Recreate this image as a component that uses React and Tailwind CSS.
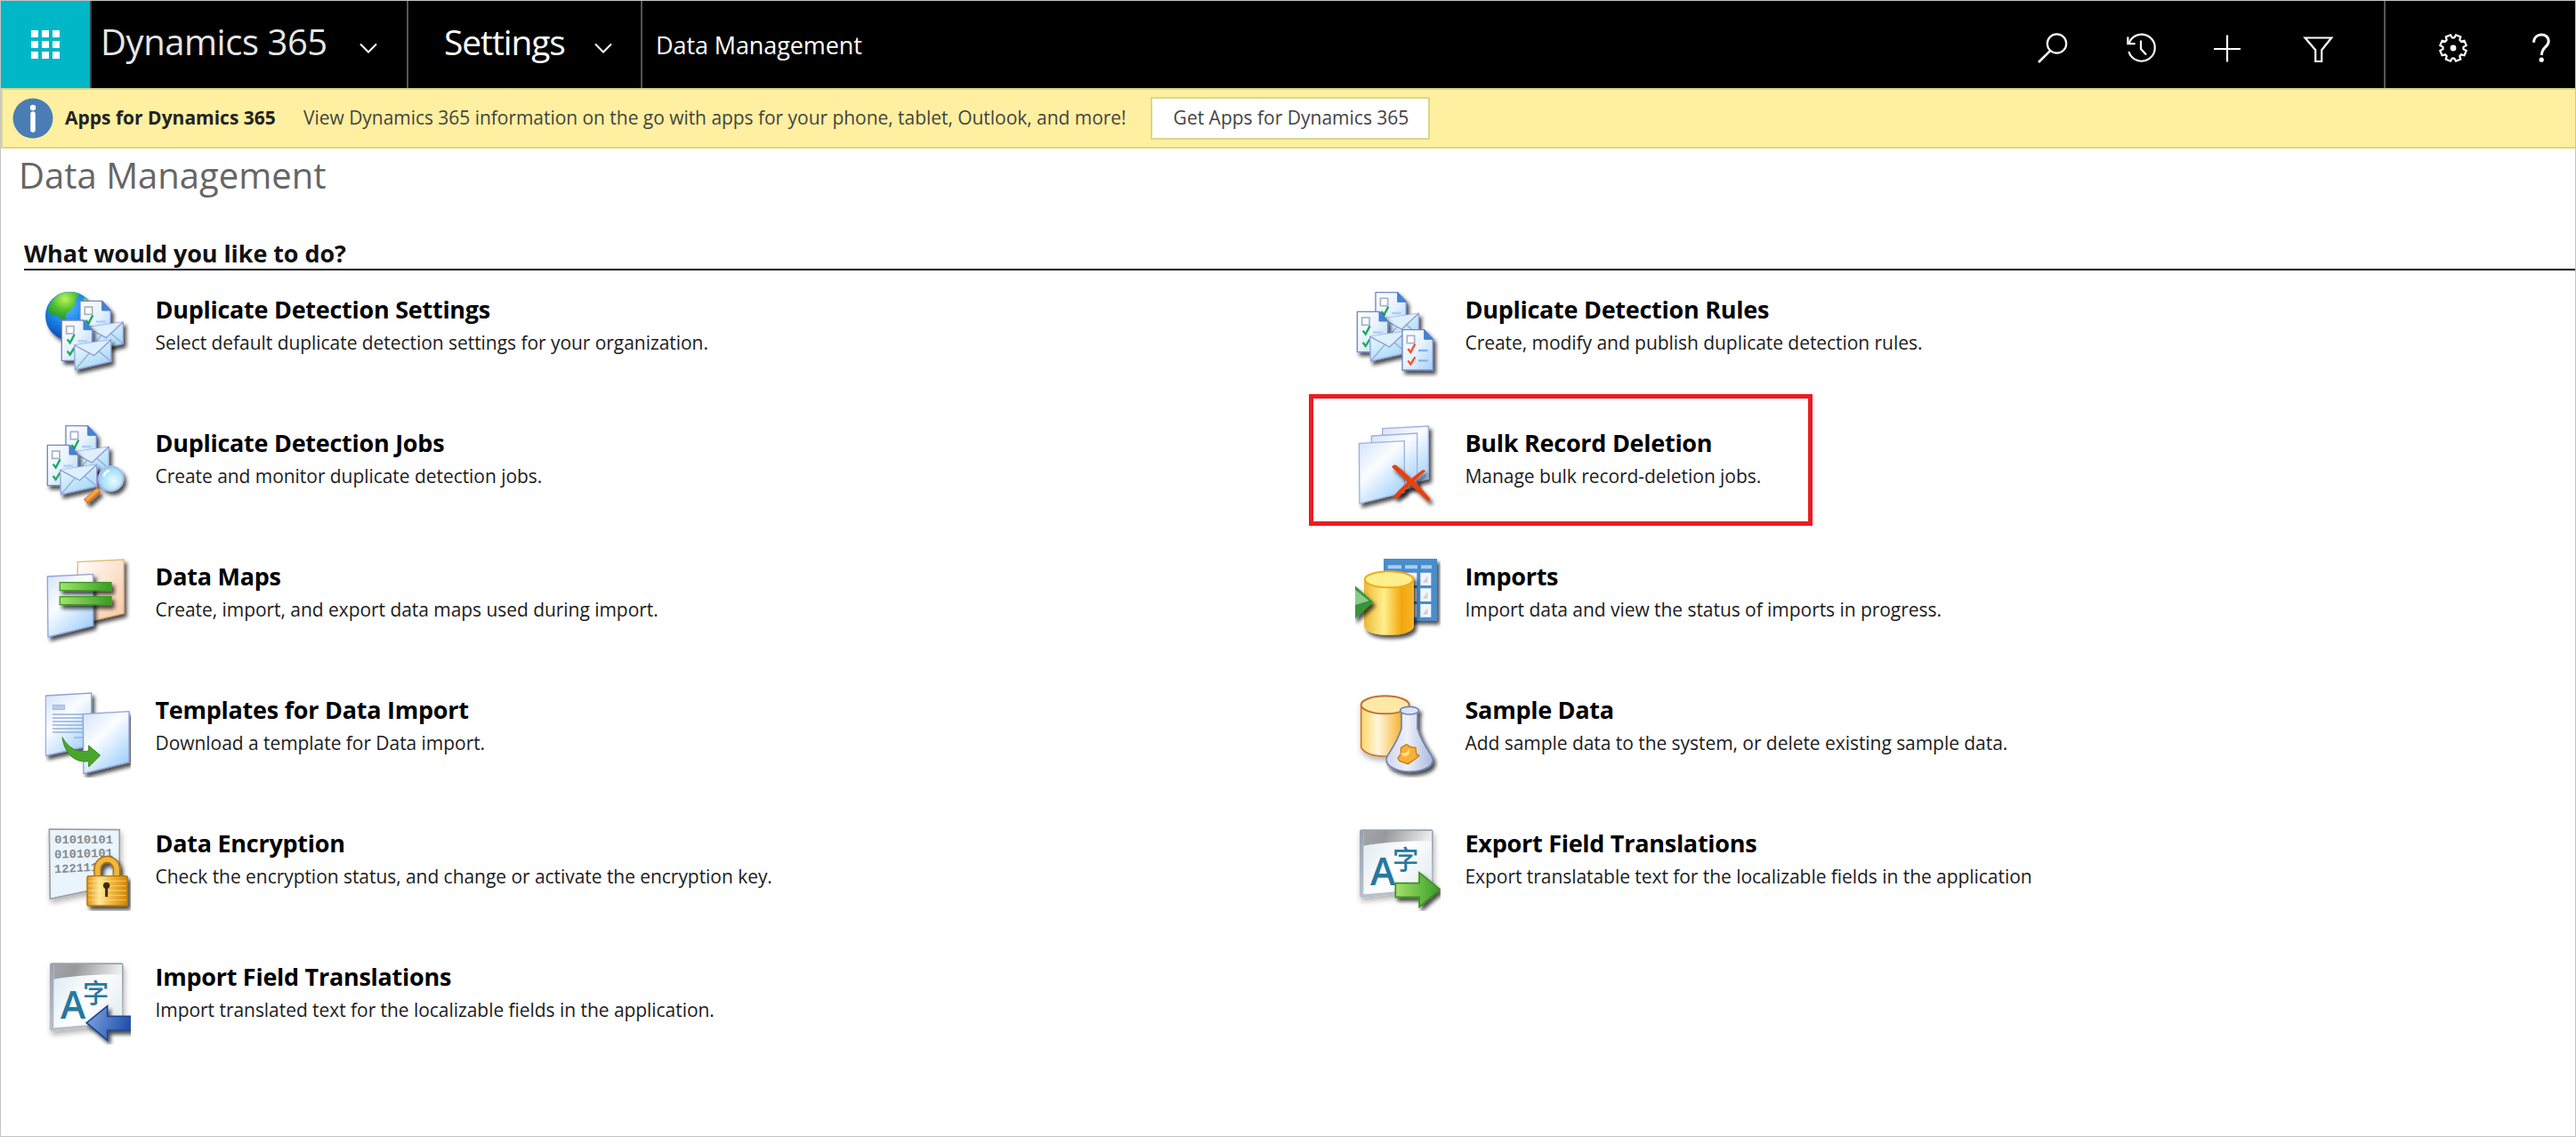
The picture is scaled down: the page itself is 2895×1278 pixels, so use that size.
import React from "react";

const FONT = "font-['Open_Sans','Noto_Sans','Noto_Sans_CJK_SC',sans-serif]";

/* ---------- shared gradients and filters ---------- */

function Defs() {
  return (
    <svg className="absolute size-0" aria-hidden="true">
      <defs>
        <linearGradient id="paper" x1="0" y1="0" x2="1" y2="1">
          <stop offset="0" stopColor="#ffffff" />
          <stop offset="0.5" stopColor="#e6f2fe" />
          <stop offset="1" stopColor="#a4cff8" />
        </linearGradient>
        <linearGradient id="sheet" x1="0" y1="0" x2="0.7" y2="1">
          <stop offset="0" stopColor="#d3e3fa" />
          <stop offset="0.45" stopColor="#fbfdff" />
          <stop offset="1" stopColor="#a3d1fc" />
        </linearGradient>
        <linearGradient id="peach" x1="0" y1="0" x2="1" y2="1">
          <stop offset="0" stopColor="#ffffff" />
          <stop offset="1" stopColor="#f9c7a0" />
        </linearGradient>
        <linearGradient id="mail" x1="0" y1="0" x2="0.6" y2="1">
          <stop offset="0" stopColor="#f6fcff" />
          <stop offset="0.5" stopColor="#cdebfb" />
          <stop offset="1" stopColor="#a2d8f6" />
        </linearGradient>
        <linearGradient id="bar" x1="0" y1="0" x2="1" y2="0">
          <stop offset="0" stopColor="#a4e26a" />
          <stop offset="1" stopColor="#379c26" />
        </linearGradient>
        <linearGradient id="blueArrow" x1="0" y1="0" x2="1" y2="0.3">
          <stop offset="0" stopColor="#84a9e6" />
          <stop offset="1" stopColor="#2452ab" />
        </linearGradient>
        <linearGradient id="gold" x1="0" y1="0" x2="1" y2="0">
          <stop offset="0" stopColor="#eeb736" />
          <stop offset="0.4" stopColor="#fff08c" />
          <stop offset="0.75" stopColor="#f3a60d" />
          <stop offset="1" stopColor="#f6b52c" />
        </linearGradient>
        <linearGradient id="paleGold" x1="0" y1="0" x2="1" y2="0">
          <stop offset="0" stopColor="#fdd668" />
          <stop offset="0.35" stopColor="#fff7dc" />
          <stop offset="0.85" stopColor="#f6b22e" />
        </linearGradient>
        <linearGradient id="lock" x1="0" y1="0" x2="1" y2="0">
          <stop offset="0" stopColor="#e0920f" />
          <stop offset="0.3" stopColor="#ffe79a" />
          <stop offset="0.6" stopColor="#f2b73c" />
          <stop offset="1" stopColor="#d08404" />
        </linearGradient>
        <linearGradient id="titlebar" x1="0" y1="0" x2="1" y2="0.1">
          <stop offset="0" stopColor="#a2a4a7" />
          <stop offset="0.35" stopColor="#97999b" />
          <stop offset="1" stopColor="#eceded" />
        </linearGradient>
        <linearGradient id="pane" x1="0" y1="0" x2="1" y2="0.6">
          <stop offset="0" stopColor="#d8e8f0" />
          <stop offset="0.6" stopColor="#ffffff" />
          <stop offset="1" stopColor="#e8eff3" />
        </linearGradient>
        <linearGradient id="frame" x1="0" y1="0" x2="0" y2="1">
          <stop offset="0" stopColor="#98a1b0" />
          <stop offset="1" stopColor="#b9c0cc" />
        </linearGradient>
        <linearGradient id="glass" x1="0" y1="0" x2="1" y2="0">
          <stop offset="0" stopColor="#cdd6ec" />
          <stop offset="0.45" stopColor="#eef1fa" />
          <stop offset="1" stopColor="#aab8dc" />
        </linearGradient>
        <radialGradient id="ocean" cx="0.45" cy="0.3" r="0.75">
          <stop offset="0" stopColor="#5cb8ff" />
          <stop offset="0.5" stopColor="#1a83ea" />
          <stop offset="1" stopColor="#0a3fa6" />
        </radialGradient>
        <radialGradient id="land" cx="0.55" cy="0.25" r="0.8">
          <stop offset="0" stopColor="#bdf25c" />
          <stop offset="0.5" stopColor="#4fc02c" />
          <stop offset="1" stopColor="#1f8a3a" />
        </radialGradient>
        <radialGradient id="lens" cx="0.6" cy="0.6" r="0.65">
          <stop offset="0" stopColor="#e9fcff" />
          <stop offset="0.7" stopColor="#a5e1fb" />
          <stop offset="1" stopColor="#8fc4ee" />
        </radialGradient>
        <filter id="shadow" x="-20%" y="-20%" width="150%" height="150%">
          <feDropShadow dx="9" dy="12" stdDeviation="6" floodColor="#000" floodOpacity="0.7" />
        </filter>
        <filter id="softShadow" x="-20%" y="-20%" width="150%" height="150%">
          <feDropShadow dx="4" dy="12" stdDeviation="9" floodColor="#000" floodOpacity="0.3" />
        </filter>
      </defs>
    </svg>
  );
}

function Tile({ children }) {
  return (
    <svg viewBox="0 0 288 288" className="block size-24 shrink-0 overflow-hidden">
      {children}
    </svg>
  );
}

/* ---------- tile artwork ---------- */

function CheckDoc({ x, y, check = "#17ab5c", line = "#a9cdf5" }) {
  return (
    <g transform={`translate(${x} ${y})`}>
      <path d="M0 0H74L103 32V136H0Z" fill="url(#paper)" stroke="#7187c8" strokeWidth="4" />
      <path d="M74 0L103 32H74Z" fill="#3c85dc" stroke="#5a75c0" strokeWidth="3" />
      <rect x="16" y="20" width="25" height="25" fill="#fff" stroke="#a9afc6" strokeWidth="5" />
      <path d="M19 64L28 76L43 48" fill="none" stroke={check} strokeWidth="7" />
      <path d="M19 104L28 116L43 92" fill="none" stroke={check} strokeWidth="7" />
      <path d="M54 70H86M54 104H86" stroke={line} strokeWidth="7" />
    </g>
  );
}

function Envelope({ x, y }) {
  return (
    <g transform={`translate(${x} ${y})`}>
      <path d="M0 18L123 0V73L2 101Z" fill="url(#mail)" stroke="#98a0da" strokeWidth="4" />
      <path d="M2 101L50 45M123 73L82 38" stroke="#9da6da" strokeWidth="4" />
      <path d="M0 18L66 53L123 0" fill="#dcf0fd" stroke="#8f98d2" strokeWidth="4" />
    </g>
  );
}

function MailStack() {
  return (
    <>
      <g filter="url(#shadow)"><CheckDoc x={69} y={2} /></g>
      <g filter="url(#shadow)"><Envelope x={91} y={73} /></g>
      <g filter="url(#shadow)">
        <CheckDoc x={7} y={67} />
        <Envelope x={50} y={133} />
      </g>
    </>
  );
}

const DetectionSettingsIcon = () => (
  <Tile>
    <g filter="url(#shadow)">
      <circle cx="82" cy="81" r="82" fill="url(#ocean)" />
      <path d="M8 62C14 34 34 12 62 3C84 -1 104 2 113 6C108 22 96 22 104 34C100 46 88 50 84 66C74 68 66 76 70 90C60 100 50 92 44 84C34 78 22 84 16 76Z" fill="url(#land)" />
      <path d="M124 18C136 20 150 36 154 46L130 38Z" fill="url(#land)" />
    </g>
    <g transform="translate(48 29)"><MailStack /></g>
  </Tile>
);

const DetectionJobsIcon = () => (
  <Tile>
    <MailStack />
    <g filter="url(#shadow)">
      <path d="M180 219L136 258" stroke="#c4743a" strokeWidth="22" />
      <path d="M178 217L137 253" stroke="#f9a13f" strokeWidth="13" />
      <circle cx="221" cy="180" r="41" fill="url(#lens)" stroke="#a9c0ea" strokeWidth="6" />
      <path d="M196 172A28 28 0 0 1 216 152" fill="none" stroke="#fff" strokeWidth="8" />
    </g>
  </Tile>
);

const DetectionRulesIcon = () => (
  <Tile>
    <MailStack />
    <g filter="url(#shadow)"><CheckDoc x={159} y={128} check="#f0552a" line="#7db4ec" /></g>
  </Tile>
);

const BulkDeletionIcon = () => (
  <Tile>
    <g filter="url(#shadow)" stroke="#9fb0dd" strokeWidth="4" fill="url(#sheet)">
      <path d="M92 11L247 3V180L92 220Z" />
      <path d="M55 36L209 27V206L55 240Z" />
      <path d="M13 61L166 53V226L15 264Z" />
    </g>
    <g filter="url(#shadow)" fill="#e8400e">
      <path d="M124 142Q126 132 138 134Q200 184 254 248L246 258Q184 196 124 142Z" />
      <path d="M228 150L238 154Q188 196 146 242Q134 250 128 240Q172 190 228 150Z" />
    </g>
  </Tile>
);

const DataMapsIcon = () => (
  <Tile>
    <g filter="url(#shadow)">
      <path d="M109 11L264 3V184L109 220Z" fill="url(#peach)" stroke="#e3b878" strokeWidth="4" />
    </g>
    <g filter="url(#shadow)">
      <path d="M7 60L161 52V226L9 264Z" fill="url(#sheet)" stroke="#8fa2dc" strokeWidth="4" />
    </g>
    <g filter="url(#shadow)" fill="url(#bar)" stroke="#3f9a25" strokeWidth="4">
      <rect x="49" y="80" width="173" height="27" />
      <rect x="49" y="128" width="173" height="27" />
    </g>
  </Tile>
);

const TemplatesIcon = () => (
  <Tile>
    <g filter="url(#shadow)">
      <path d="M1 12L155 3V180L1 214Z" fill="url(#sheet)" stroke="#8fa2dc" strokeWidth="4" />
    </g>
    <rect x="25" y="43" width="40" height="16" fill="#b9cbea" stroke="#93abd8" strokeWidth="2" />
    <path d="M24 75H130M24 87H130M24 99H130M24 111H130M24 123H130M24 135H130M96 153H130" stroke="#96aedb" strokeWidth="5" />
    <g filter="url(#shadow)">
      <path d="M127 74L282 65V236L129 274Z" fill="url(#sheet)" stroke="#8fa2dc" strokeWidth="4" />
    </g>
    <path d="M57 152C76 186 106 206 146 198V180L185 213L146 252V233C98 240 64 205 57 152Z" fill="#4aa52c" stroke="#3a8f24" strokeWidth="3" />
  </Tile>
);

const EncryptionIcon = () => (
  <Tile>
    <g filter="url(#softShadow)">
      <path d="M13 12L250 14V198L16 247Z" fill="#e9f4fd" stroke="#9a9da1" strokeWidth="5" />
    </g>
    <g className="font-['Liberation_Mono',monospace] text-[41px] font-bold" fill="#85898d">
      <text x="31" y="61">01010101</text>
      <text x="31" y="110" transform="rotate(-1.5 31 110)">01010101</text>
      <text x="31" y="160" transform="rotate(-3 31 160)">122111</text>
    </g>
    <g filter="url(#shadow)">
      <path d="M176 172V146A32 32 0 0 1 240 146V172" fill="none" stroke="#a96f10" strokeWidth="26" />
      <path d="M176 172V146A32 32 0 0 1 240 146V172" fill="none" stroke="#efb73f" strokeWidth="17" />
      <rect x="141" y="170" width="136" height="100" rx="4" fill="url(#lock)" stroke="#b57409" strokeWidth="4" />
      <path d="M145 187H273M145 203H273M145 219H273M145 235H273M145 251H273" stroke="#fff0ae" strokeOpacity="0.45" strokeWidth="4" />
      <circle cx="206" cy="202" r="11" fill="#3b2a08" />
      <path d="M206 202V240" stroke="#3b2a08" strokeWidth="9" />
    </g>
  </Tile>
);

function TranslationWindow() {
  return (
    <>
      <path filter="url(#softShadow)" d="M22 13H256Q263 13 263 20V212Q263 218 256 219L24 243Q15 243 15 235V22Q15 13 22 13Z" fill="url(#frame)" />
      <path d="M28 18H258V212L28 232Z" fill="url(#pane)" />
      <path d="M28 18H258V52Q120 52 28 68Z" fill="url(#titlebar)" />
      <g fill="#27789f">
        <text x="51" y="202" className="font-['Open_Sans',sans-serif] text-[128px] font-semibold">A</text>
        <text x="126" y="146" className="font-['Noto_Sans_CJK_SC',sans-serif] text-[88px] font-medium">字</text>
      </g>
    </>
  );
}

const ExportTranslationsIcon = () => (
  <Tile>
    <TranslationWindow />
    <path filter="url(#shadow)" d="M136 194H216V158L286 215L216 274V241H136Z" fill="url(#bar)" stroke="#3c8f22" strokeWidth="5" />
  </Tile>
);

const ImportTranslationsIcon = () => (
  <Tile>
    <TranslationWindow />
    <path filter="url(#shadow)" d="M139 215L209 158V193H292V240H209V274Z" fill="url(#blueArrow)" stroke="#1f458f" strokeWidth="5" />
  </Tile>
);

const ImportsIcon = () => (
  <Tile>
    <g filter="url(#shadow)"><path d="M96 0H276V209H96Z" fill="#4a8dcd" /></g>
    <path d="M110 28H156M168 28H210M222 28H258" stroke="#a9cdf0" strokeWidth="12" />
    <g fill="#f4f6fa">
      <path d="M166 47H208V90H166ZM220 47H256V90H220ZM166 100H208V144H166ZM220 100H256V144H220ZM166 153H208V197H166ZM220 153H256V197H220Z" />
    </g>
    <path d="M228 80L244 58V80ZM228 134L244 112V134ZM228 188L244 166V188Z" fill="#c9ced8" />
    <g filter="url(#shadow)">
      <path d="M30 70V230Q44 257 114 257Q184 257 198 230V70Z" fill="url(#gold)" />
      <ellipse cx="114" cy="70" rx="82" ry="27" fill="#fdf08c" stroke="#eeab1c" strokeWidth="6" />
    </g>
    <path filter="url(#shadow)" d="M-4 88L61 146L-4 206Z" fill="#39953a" />
    <path d="M0 104L46 142L0 156Z" fill="#8ccb8b" />
  </Tile>
);

const SampleDataIcon = () => (
  <Tile>
    <g filter="url(#softShadow)">
      <path d="M20 43V186Q36 216 101 216Q166 216 182 186V43Z" fill="url(#paleGold)" stroke="#c67a3a" strokeWidth="5" />
      <ellipse cx="101" cy="43" rx="81" ry="30" fill="#fde9a6" stroke="#c06f35" strokeWidth="6" />
    </g>
    <g filter="url(#shadow)">
      <path d="M156 64V122Q146 158 110 212Q96 236 120 252Q146 268 183 268Q222 268 248 252Q270 236 256 212Q220 158 210 122V64Z" fill="url(#glass)" stroke="#6f7fb2" strokeWidth="5" />
      <ellipse cx="183" cy="62" rx="31" ry="13" fill="#dbe3f5" stroke="#7585b8" strokeWidth="5" />
    </g>
    <path d="M172 176L186 184L204 188L206 208L216 214L202 226L178 242L150 232L144 222L154 208V188Z" fill="#f8b133" stroke="#c9781c" strokeWidth="4" />
    <path d="M152 206L172 204L184 190L182 210L166 218Z" fill="#ffe08c" />
  </Tile>
);

/* ---------- top bar icons ---------- */

const gearPath = (() => {
  const pts = [];
  for (let i = 0; i < 8; i++) {
    const a = (i * 45 + 22.5) * (Math.PI / 180);
    [[-0.29, 11.6], [-0.19, 15], [0.19, 15], [0.29, 11.6]].forEach(([d, r]) => {
      pts.push(`${(17 + r * Math.cos(a + d)).toFixed(2)} ${(17 + r * Math.sin(a + d)).toFixed(2)}`);
    });
  }
  return `M${pts.join("L")}Z`;
})();

function BarIcon({ children }) {
  return (
    <svg viewBox="0 0 34 34" className="block size-[34px] shrink-0 overflow-visible" fill="none" stroke="#fff" strokeWidth="2.2">
      {children}
    </svg>
  );
}

function Chevron({ className }) {
  return (
    <svg viewBox="0 0 20 12" className={`h-3 w-5 shrink-0 ${className}`} fill="none" stroke="#fff" strokeWidth="2">
      <path d="M1 1.5L10 10.5L19 1.5" />
    </svg>
  );
}

function TopBar() {
  return (
    <header className="flex h-[98px] bg-black text-white">
      <div className="flex w-[102px] items-center justify-center border-r-2 border-[#444] bg-[#00b7c7]">
        <div className="grid grid-cols-3 gap-1">
          {Array.from({ length: 9 }, (_, i) => (
            <span key={i} className="size-2 bg-white" />
          ))}
        </div>
      </div>
      <div className="flex w-[356px] items-center border-r-2 border-[#555] pl-[10px]">
        <span className="w-[291px] pb-[7px] text-[40px] leading-[54px] tracking-[-0.45px] text-[#e6e6e6]">Dynamics 365</span>
        <Chevron className="mt-2" />
      </div>
      <div className="flex w-[263px] items-center border-r-2 border-[#555] pl-[40px]">
        <span className="w-[169px] pb-[7px] text-[39px] leading-[54px] tracking-[-1.1px]">Settings</span>
        <Chevron className="mt-2" />
      </div>
      <div className="flex items-center pt-0.5 pl-[15px] text-[27px] tracking-[-0.1px]">Data Management</div>
      <div className="ml-auto flex">
        <div className="flex w-[392px] items-center gap-[65px] border-r-2 border-[#555] pt-2">
          <BarIcon>
            <circle cx="22.5" cy="12" r="10.7" />
            <path d="M15.3 19.8L2 33" strokeWidth="2.6" />
          </BarIcon>
          <BarIcon>
            <g transform="translate(2 0)">
              <path d="M2.8 11.2A15 15 0 1 1 2.4 21" />
              <path d="M1.4 4.4V12.2H9.6" />
              <path d="M16 8.5V18L22 24.5" />
            </g>
          </BarIcon>
          <BarIcon>
            <path d="M16 2.5V32.5M1 18H31" />
          </BarIcon>
          <BarIcon>
            <path d="M4.5 5.5H34.2L23.2 19.2V32H16.2V19.2Z" />
          </BarIcon>
        </div>
        <div className="flex w-[213px] items-center gap-[65px] pt-2 pl-[59px]">
          <BarIcon>
            <path d={gearPath} />
            <circle cx="17" cy="17" r="3.4" fill="#fff" stroke="none" />
          </BarIcon>
          <BarIcon>
            <path d="M8.6 10.8C8.6 -0.6 25.2 -0.6 25.2 9.2C25.2 16 17.4 15.6 17.4 25" strokeWidth="3" />
            <circle cx="17.2" cy="30.2" r="2.6" fill="#fff" stroke="none" />
          </BarIcon>
        </div>
      </div>
    </header>
  );
}

function Banner() {
  return (
    <div className="flex h-[68px] items-center border-2 border-r-0 border-[#d8d88a] bg-[#fef0a0] pl-[11px] text-[21px] text-[#444]">
      <svg viewBox="0 0 46 46" className="size-[46px] shrink-0">
        <circle cx="23" cy="23" r="22.5" fill="#4a7db5" />
        <circle cx="23" cy="11" r="3.2" fill="#fff" />
        <path d="M23 18V36" stroke="#fff" strokeWidth="5.5" strokeLinecap="round" />
      </svg>
      <span className="ml-[13px] w-[268px] font-bold text-[#222]">Apps for Dynamics 365</span>
      <span className="w-[952px] tracking-[-0.04px] whitespace-nowrap">
        View Dynamics 365 information on the go with apps for your phone, tablet, Outlook, and more!
      </span>
      <button className="flex h-12 w-[314px] items-center justify-center border-2 border-[#d8d88a] bg-white pl-0.5 whitespace-nowrap">
        Get Apps for Dynamics 365
      </button>
    </div>
  );
}

/* ---------- content ---------- */

const items = [
  { icon: DetectionSettingsIcon, title: "Duplicate Detection Settings", text: "Select default duplicate detection settings for your organization." },
  { icon: DetectionRulesIcon, title: "Duplicate Detection Rules", text: "Create, modify and publish duplicate detection rules." },
  { icon: DetectionJobsIcon, title: "Duplicate Detection Jobs", text: "Create and monitor duplicate detection jobs." },
  { icon: BulkDeletionIcon, title: "Bulk Record Deletion", text: "Manage bulk record-deletion jobs.", highlighted: true },
  { icon: DataMapsIcon, title: "Data Maps", text: "Create, import, and export data maps used during import." },
  { icon: ImportsIcon, title: "Imports", text: "Import data and view the status of imports in progress." },
  { icon: TemplatesIcon, title: "Templates for Data Import", text: "Download a template for Data import." },
  { icon: SampleDataIcon, title: "Sample Data", text: "Add sample data to the system, or delete existing sample data." },
  { icon: EncryptionIcon, title: "Data Encryption", text: "Check the encryption status, and change or activate the encryption key." },
  { icon: ExportTranslationsIcon, title: "Export Field Translations", text: "Export translatable text for the localizable fields in the application" },
  { icon: ImportTranslationsIcon, title: "Import Field Translations", text: "Import translated text for the localizable fields in the application." },
];

function Item({ icon: Icon, title, text, highlighted }) {
  return (
    <div className="relative flex h-[150px] items-start">
      <Icon />
      <div className="ml-[27.5px] pt-0.5 whitespace-nowrap">
        <h3 className="text-[27px] leading-9 font-bold tracking-[-0.27px] text-black">{title}</h3>
        <p className="mt-[5px] text-[21px] leading-7 tracking-[-0.05px] text-[#1c1c1c]">{text}</p>
      </div>
      {highlighted && (
        <div className="absolute -top-[35px] -left-[52px] h-[148px] w-[566px] border-[5px] border-[#ed1c24]" />
      )}
    </div>
  );
}

export default function App() {
  return (
    <div className={`h-[1278px] w-[2895px] overflow-hidden border border-[#c4c4c4] bg-white ${FONT}`}>
      <Defs />
      <TopBar />
      <Banner />
      <main>
        <h1 className="mt-[3px] ml-5 text-[40px] leading-[54px] text-[#666]">Data Management</h1>
        <h2 className="mt-[43px] ml-[26px] h-[37px] border-b-2 border-[#111] text-[27px] leading-9 font-bold tracking-[-0.08px] text-[#111]">
          What would you like to do?
        </h2>
        <div className="mt-6 ml-[50px] grid grid-cols-[1472px_1fr]">
          {items.map((item) => (
            <Item key={item.title} {...item} />
          ))}
        </div>
      </main>
    </div>
  );
}
